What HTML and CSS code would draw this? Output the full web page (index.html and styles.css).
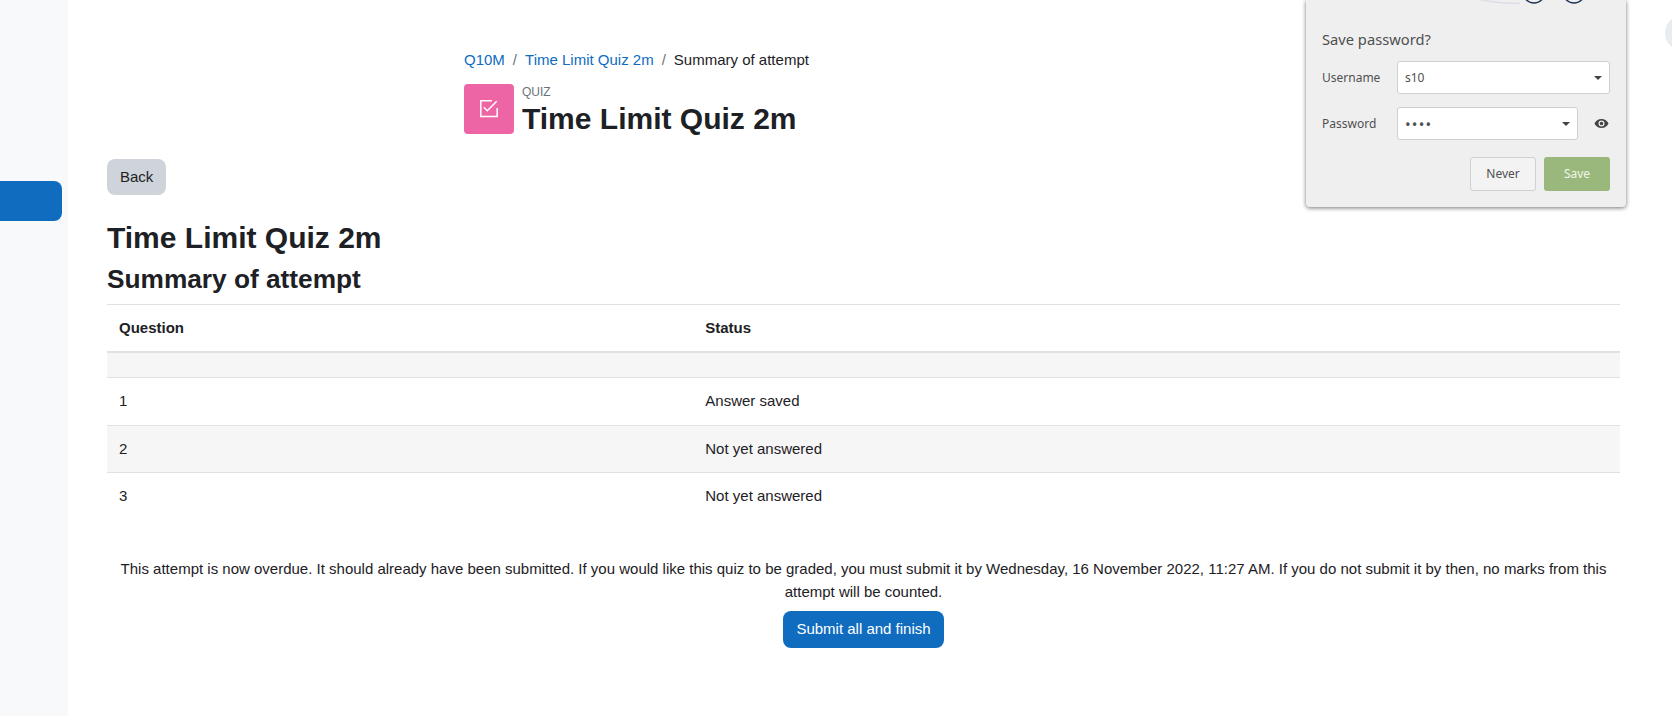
FILE: index.html
```html
<!DOCTYPE html>
<html lang="en">
<head>
  <meta charset="UTF-8">
  <title>Time Limit Quiz 2m: Summary of attempt</title>
  <link rel="stylesheet" href="styles.css">
</head>
<body>
  <aside class="sidebar">
    <div class="sidebar-item"></div>
  </aside>

  <main class="content">
    <div class="page-header">
      <nav class="breadcrumb">
        <a href="#">Q10M</a><span class="sep">/</span><a href="#">Time Limit Quiz 2m</a><span class="sep">/</span><span>Summary of attempt</span>
      </nav>
      <div class="activity">
        <div class="activity-icon">
          <svg width="18" height="18" viewBox="0 0 18 18" fill="none" stroke="#fff" stroke-width="1.5">
            <path d="M17.2 8V16.5H.8V.8H12"/>
            <path d="M3.7 7.3L7.3 10.7L16.7 1.3"/>
          </svg>
        </div>
        <div>
          <div class="activity-type">QUIZ</div>
          <div class="activity-name">Time Limit Quiz 2m</div>
        </div>
      </div>
    </div>

    <a href="#" class="btn-back">Back</a>

    <h2>Time Limit Quiz 2m</h2>
    <h3>Summary of attempt</h3>

    <table class="summary">
      <thead>
        <tr><th class="col-question">Question</th><th>Status</th></tr>
      </thead>
      <tbody>
        <tr class="spacer"><td colspan="2"></td></tr>
        <tr><td>1</td><td>Answer saved</td></tr>
        <tr class="odd"><td>2</td><td>Not yet answered</td></tr>
        <tr><td>3</td><td>Not yet answered</td></tr>
      </tbody>
    </table>

    <div class="submit-box">
      <p>This attempt is now overdue. It should already have been submitted. If you would like this quiz to be graded, you must submit it by Wednesday, 16 November 2022, 11:27 AM. If you do not submit it by then, no marks from this attempt will be counted.</p>
      <button class="btn-submit">Submit all and finish</button>
    </div>
  </main>

  <div class="avatar"></div>

  <div class="save-popup">
    <svg class="popup-art" width="320" height="6" viewBox="1 0 320 6" fill="none">
      <path d="M172 -1C185 2 198 3.5 215 3.5" stroke="#dcdde6" stroke-width="1.5"/>
      <circle cx="229" cy="-8" r="11" stroke="#1f3557" stroke-width="1.4"/>
      <circle cx="269" cy="-8" r="11" stroke="#1f3557" stroke-width="1.4"/>
    </svg>
    <div class="popup-title">Save password?</div>
    <div class="popup-row">
      <label>Username</label>
      <div class="popup-field">s10<span class="caret"></span></div>
    </div>
    <div class="popup-row">
      <label>Password</label>
      <div class="popup-field field-short"><span class="dots">••••</span><span class="caret"></span></div>
      <svg class="eye" width="15" height="15" viewBox="0 0 16 16">
        <path fill="#444" fill-rule="evenodd" d="M8 3.2C4.6 3.2 1.7 5.2.5 8c1.2 2.8 4.1 4.8 7.5 4.8s6.3-2 7.5-4.8c-1.2-2.8-4.1-4.8-7.5-4.8zm0 8a3.2 3.2 0 1 1 0-6.4 3.2 3.2 0 0 1 0 6.4zM8 6.1a1.9 1.9 0 1 0 0 3.8 1.9 1.9 0 0 0 0-3.8z"/>
      </svg>
    </div>
    <div class="popup-actions">
      <button class="popup-never">Never</button>
      <button class="popup-save">Save</button>
    </div>
  </div>
</body>
</html>
```
FILE: styles.css
```css
html, body {
  height: 100%;
}

body {
  font-family: "Liberation Sans", Arial, sans-serif;
  font-size: 15px;
  line-height: 22.5px;
  color: #1d2125;
  margin: 0;
  padding: 0;
  display: flex;
  overflow: hidden;
  background: white;
}

a {
  color: #0f6cbf;
  text-decoration: none;
}

.sidebar {
  width: 68px;
  flex-shrink: 0;
  background: #f8f9fa;
  padding-top: 181px;
}

.sidebar-item {
  width: 62px;
  height: 40px;
  background: #0f6cbf;
  border-radius: 0 8px 8px 0;
}

.content {
  width: 1513px;
  margin-left: 39px;
  padding-top: 49px;
}

.page-header {
  margin-left: 357px;
}

.breadcrumb .sep {
  color: #6a737b;
  margin: 0 8px;
}

.activity {
  display: flex;
  gap: 8px;
  margin-top: 12px;
}

.activity-icon {
  width: 50px;
  height: 50px;
  background: #ee65a5;
  border-radius: 4px;
  display: flex;
  align-items: center;
  justify-content: center;
}

.activity-type {
  font-size: 12px;
  line-height: 14px;
  color: #6a737b;
  margin-top: 1px;
}

.activity-name {
  font-size: 30px;
  font-weight: bold;
  line-height: 36px;
  margin-top: 2px;
}

.btn-back {
  display: block;
  width: fit-content;
  margin-top: 22px;
  padding: 7px 13px;
  line-height: 22px;
  background: #ced4da;
  color: #1d2125;
  border-radius: 8px;
}

h2 {
  font-size: 30px;
  line-height: 36px;
  margin: 25px 0 0;
}

h3 {
  font-size: 26.25px;
  line-height: 32px;
  margin: 7px 0 9px;
}

.summary {
  width: 100%;
  border-collapse: collapse;
  border-top: 1px solid #dee2e6;
}

.summary th, .summary td {
  text-align: left;
  padding: 11px 12px 13px;
  line-height: 23px;
}

.summary thead th {
  border-bottom: 2px solid #dee2e6;
  height: 23px;
  padding-top: 11px;
  padding-bottom: 12px;
}

.col-question {
  width: 38.75%;
}

.summary tbody td {
  border-bottom: 1px solid #dee2e6;
}

.summary tbody tr:last-child td {
  border-bottom: none;
}

.summary .spacer td {
  padding: 0;
  height: 24px;
  background: #f6f6f6;
}

.summary .odd td {
  background: #f6f6f6;
  padding-bottom: 12px;
}

.submit-box {
  text-align: center;
  margin-top: 37px;
}

.submit-box p {
  margin: 0 0 8px;
  padding: 0 8px;
  line-height: 23px;
}

.btn-submit {
  font: inherit;
  color: white;
  background: #0f6cbf;
  border: none;
  border-radius: 8px;
  padding: 7px 13px;
  height: 37px;
}

.avatar {
  position: absolute;
  left: 1665px;
  top: 15px;
  width: 36px;
  height: 36px;
  border-radius: 50%;
  background: #e9ecef;
}

.save-popup {
  position: absolute;
  left: 1306px;
  top: 0;
  width: 320px;
  height: 207px;
  box-sizing: border-box;
  padding: 28px 16px 0 16px;
  background: #efefef;
  border-radius: 0 0 4px 4px;
  box-shadow: 0 1px 4px rgba(0, 0, 0, 0.55);
  font-family: "Noto Sans", "Open Sans", sans-serif;
  font-size: 12px;
  color: #505050;
}

.popup-art {
  position: absolute;
  left: 0;
  top: 0;
}

.popup-title {
  font-size: 14.7px;
  line-height: 22px;
  margin-bottom: 11px;
}

.popup-row {
  display: flex;
  align-items: center;
  margin-bottom: 13px;
  height: 33px;
}

.popup-row label {
  width: 75px;
  flex-shrink: 0;
  margin-top: 2px;
}

.popup-field {
  position: relative;
  width: 213px;
  height: 33px;
  box-sizing: border-box;
  border: 1px solid #cfcfcf;
  border-radius: 3px;
  background: white;
  padding: 0 7px;
  line-height: 32px;
}

.field-short {
  width: 181px;
}

.dots {
  font-size: 15px;
  letter-spacing: 1.2px;
}

.caret {
  position: absolute;
  right: 7px;
  top: 14px;
  border-left: 4px solid transparent;
  border-right: 4px solid transparent;
  border-top: 4px solid #444;
}

.eye {
  margin-left: 16px;
}

.popup-actions {
  display: flex;
  justify-content: flex-end;
  gap: 8px;
  margin-top: 17px;
}

.popup-actions button {
  font: inherit;
  width: 66px;
  height: 34px;
  border-radius: 3px;
}

.popup-never {
  background: #f3f3f3;
  border: 1px solid #d0d0d0;
  color: #505050;
}

.popup-save {
  background: #9bb87c;
  border: none;
  color: #f2f5ec;
}
```
